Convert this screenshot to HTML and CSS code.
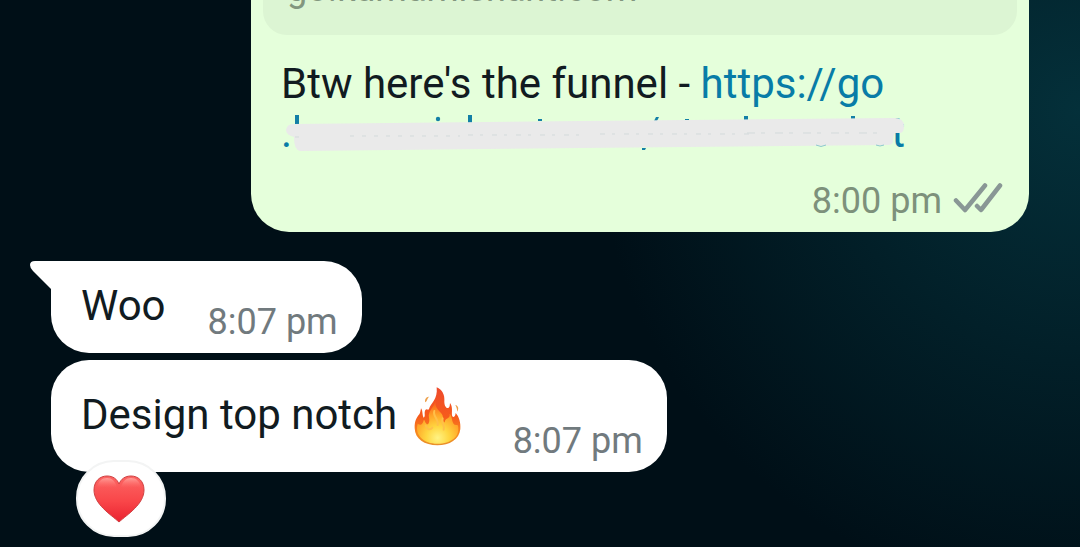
FILE: index.html
```html
<!DOCTYPE html>
<html lang="en">
<head>
<meta charset="utf-8">
<title>Chat</title>
<link rel="stylesheet" href="styles.css">
</head>
<body>
<main class="chat">
  <article class="bubble bubble-out">
    <div class="preview"><span class="preview-domain">go.kumarnishant.com</span></div>
    <div class="message">
      <p class="text">Btw here's the funnel - <a class="link" href="#">https://go</a></p>
      <div class="hidden-link">
        <a class="link hidden-ends" href="#"><span>.</span><span>t</span></a>
        <svg class="scribble" viewBox="0 0 624 44" aria-hidden="true">
          <g fill="#137fa6">
            <rect x="13" y="5" width="4" height="9"/>
            <circle cx="156" cy="9" r="2.2"/>
            <rect x="186" y="5" width="4" height="8"/>
            <rect x="256" y="9" width="4" height="2"/>
            <path d="M372 11l2-4h3l-2 4z"/>
            <rect x="403" y="9" width="4" height="1"/>
            <rect x="462" y="6" width="4" height="4"/>
            <rect x="569" y="6" width="4" height="3"/>
            <path d="M360 38h4l-1 2h-3z"/>
          </g>
          <path fill="#eaeaea" d="M11 14L300 11L612 8q10 0 10 8q0 7-4 7h-5q-2 3-2 9q-1 3-5 3L300 38L18 41q-6-1-6-14q-8-2-8-7q1-6 7-6z"/>
          <g stroke="#d3dadb" fill="none">
            <path d="M13 27h9M68 26h110" stroke-dasharray="4 8"/>
            <path d="M186 25h120M318 24h150" stroke-dasharray="5 7 3 9"/>
            <path d="M465 23h138" stroke-dasharray="8 6 4 10"/>
          </g>
          <path d="M534 35q5 3 10 0M594 35q4 2 8 0" fill="none" stroke="#8ec8cf"/>
        </svg>
      </div>
      <footer class="status">
        <time class="time">8:00 pm</time>
        <svg class="ticks" viewBox="0 0 50 32" role="img" aria-label="Delivered">
          <path d="M3 18.500L12 28L32 3.500M24 24L28 28L47 3.500" fill="none" stroke="#899795" stroke-width="4.500" stroke-linecap="round" stroke-linejoin="round"/>
        </svg>
      </footer>
    </div>
  </article>

  <article class="bubble bubble-in bubble-first">
    <svg class="tail" viewBox="0 0 23 32" aria-hidden="true"><path d="M23 0H5Q0 0 0 4Q0 7 3 10L23 30z" fill="#fff"/></svg>
    <p class="text">Woo</p>
    <time class="time">8:07 pm</time>
  </article>

  <article class="bubble bubble-in bubble-last">
    <p class="text">Design top notch
      <svg class="fire" viewBox="38 25 150 180" role="img" aria-label="Fire">
        <defs>
          <linearGradient id="flame" x1="0" y1="0" x2="0" y2="1"><stop offset="0" stop-color="#ee4a2c"/><stop offset=".5" stop-color="#f65a1c"/><stop offset=".8" stop-color="#f88a1f"/><stop offset="1" stop-color="#e8902b"/></linearGradient>
          <radialGradient id="glow" cx=".5" cy=".86" r=".8"><stop offset="0" stop-color="#fff384"/><stop offset=".35" stop-color="#ffd640"/><stop offset=".7" stop-color="#ffa428"/><stop offset="1" stop-color="#fb6a1c"/></radialGradient>
        </defs>
        <path fill="url(#flame)" d="M109 29C126 36 134 52 132 72C132 84 138 93 144 91C149 88 148 82 149 76C158 87 154 103 155 113C157 122 165 118 166 106C176 116 182 136 180 154C177 185 148 203 111 203C72 203 44 184 43 152C42 132 48 120 57 110C60 105 61 98 62 92C68 99 65 112 70 120C77 116 70 106 75 97C80 92 83 99 86 94C91 76 113 66 109 29z"/>
        <path fill="url(#glow)" d="M105 74C98 90 82 104 86 120C89 132 84 144 78 138C72 133 74 124 70 128C67 142 60 144 52 138C42 172 70 198 111 198C153 198 180 176 173 144C170 140 166 144 161 140C154 132 156 116 148 108C150 124 136 120 134 130C132 140 128 130 128 120C129 104 104 98 105 74z"/>
        <path d="M102 100C96 116 116 124 112 142M127 122C120 138 136 142 130 156M76 144C80 156 90 158 96 150" fill="none" stroke="#ffc04a" stroke-width="6" stroke-linecap="round"/>
        <path fill="#eda04a" d="M75 74C72 66 77 56 87 57C80 61 82 69 75 74zM165 82C174 84 177 94 170 102C171 94 168 88 165 82z"/>
      </svg>
    </p>
    <time class="time">8:07 pm</time>
    <button class="reaction" type="button" aria-label="Heart reaction">
      <svg class="heart" viewBox="0 0 52 48" aria-hidden="true">
        <defs>
          <linearGradient id="red" x1="0" y1="0" x2="0" y2="1"><stop offset="0" stop-color="#fc6664"/><stop offset=".55" stop-color="#f94649"/><stop offset="1" stop-color="#ea2230"/></linearGradient>
          <linearGradient id="shine" x1="0" y1="0" x2="0" y2="1"><stop offset="0" stop-color="#ff9d98"/><stop offset="1" stop-color="#ff6b68" stop-opacity="0"/></linearGradient>
        </defs>
        <path fill="url(#red)" stroke="#cf3f40" d="M26 47C17 39 1 29 1 15C1 6 7 1 14 1C20 1 24 4 26 9C28 4 32 1 38 1C45 1 51 6 51 15C51 29 35 39 26 47z"/>
        <path fill="url(#shine)" d="M4 13C5 6 9 3 14 3C19 3 22 6 24 12C18 14 10 11 4 13zM28 12C30 6 33 3 38 3C43 3 47 6 48 13C42 11 34 14 28 12z"/>
      </svg>
    </button>
  </article>
</main>
</body>
</html>
```
FILE: styles.css
```css
* { box-sizing: border-box; }

body {
  margin: 0;
  background: #000f17;
  font-family: Roboto, "Noto Sans", sans-serif;
}

.chat {
  display: flex;
  flex-direction: column;
  align-items: flex-start;
  min-height: 100vh;
  padding: 0 51px 10px;
  overflow: hidden;
  background:
    radial-gradient(ellipse 45% 90% at 100% 20%, #04303a, transparent),
    #000f17;
}

.bubble {
  position: relative;
  border-radius: 38px;
  background: #fff;
  color: #111b21;
}

.text {
  margin: 0;
  font-size: 42px;
  line-height: 49px;
}

.time {
  color: #717a7e;
  font-size: 36px;
  line-height: 42px;
  white-space: nowrap;
}

.link {
  color: #087ca7;
  text-decoration: none;
}

.bubble-out {
  align-self: stretch;
  margin-left: 200px;
  padding: 0 12px 10px;
  border-radius: 0 0 38px 38px;
  background: #e5ffdb;
}

.preview {
  display: flex;
  align-items: flex-end;
  height: 35px;
  padding: 0 24px 25px;
  border-radius: 0 0 24px 24px;
  background: #dcf5d3;
}

.preview-domain {
  color: #82967e;
  font-size: 36px;
  line-height: 42px;
}

.message { padding: 24px 14px 0 18px; }

.hidden-link {
  position: relative;
  width: 624px;
  font-size: 42px;
  line-height: 49px;
}

.hidden-ends {
  display: flex;
  justify-content: space-between;
}

.scribble {
  position: absolute;
  top: 2px;
  left: 1px;
  width: 624px;
  height: 44px;
}

.status {
  display: flex;
  align-items: center;
  justify-content: flex-end;
  gap: 11px;
  padding-top: 23px;
}

.status .time { color: #7d917b; }

.ticks {
  width: 50px;
  height: 32px;
  margin-bottom: 6px;
}

.bubble-in {
  display: flex;
  align-items: flex-end;
  padding: 19px 24px 10px 30px;
}

.bubble-first {
  gap: 42px;
  height: 92px;
  margin-top: 29px;
  border-top-left-radius: 0;
}

.bubble-first .text { padding-bottom: 13px; }

.tail {
  position: absolute;
  top: 0;
  left: -21px;
  width: 23px;
  height: 32px;
}

.bubble-last {
  gap: 50px;
  height: 112px;
  margin-top: 7px;
}

.bubble-last .text { padding-bottom: 23px; }

.fire {
  width: 50px;
  height: 60px;
  margin: -10px 0 -10px 5px;
  vertical-align: -7px;
}

.reaction {
  position: absolute;
  top: 100px;
  left: 25px;
  display: flex;
  align-items: center;
  justify-content: center;
  width: 90px;
  height: 77px;
  padding: 0 4px 0 0;
  border: 2px solid #f3f4f4;
  border-radius: 38px;
  background: #fff;
}

.heart {
  width: 52px;
  height: 48px;
}
```
